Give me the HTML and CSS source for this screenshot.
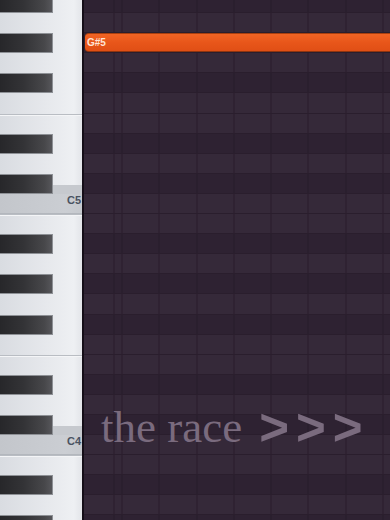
FILE: index.html
```html
<!DOCTYPE html>
<html>
<head>
<meta charset="utf-8">
<link rel="stylesheet" href="styles.css">
</head>
<body>
<div class="app">
  <div class="keys">
    <div class="k blk"><div class="bk"></div></div>
    <div class="k"></div>
    <div class="k blk"><div class="bk"></div></div>
    <div class="k"></div>
    <div class="k blk"><div class="bk"></div></div>
    <div class="k"></div>
    <div class="k e"></div>
    <div class="k blk"><div class="bk"></div></div>
    <div class="k"></div>
    <div class="k blk pre"><div class="bk"></div></div>
    <div class="k c"><span class="lbl">C5</span></div>
    <div class="k e"></div>
    <div class="k blk"><div class="bk"></div></div>
    <div class="k"></div>
    <div class="k blk"><div class="bk"></div></div>
    <div class="k"></div>
    <div class="k blk"><div class="bk"></div></div>
    <div class="k"></div>
    <div class="k e"></div>
    <div class="k blk"><div class="bk"></div></div>
    <div class="k"></div>
    <div class="k blk pre"><div class="bk"></div></div>
    <div class="k c"><span class="lbl">C4</span></div>
    <div class="k e"></div>
    <div class="k blk"><div class="bk"></div></div>
    <div class="k"></div>
    <div class="k blk"><div class="bk"></div></div>
  </div>
  <div class="roll">
    <div class="r dk"></div>
    <div class="r"></div>
    <div class="r dk"><div class="note">G#5</div></div>
    <div class="r"></div>
    <div class="r dk"></div>
    <div class="r"></div>
    <div class="r"></div>
    <div class="r dk"></div>
    <div class="r"></div>
    <div class="r dk"></div>
    <div class="r"></div>
    <div class="r"></div>
    <div class="r dk"></div>
    <div class="r"></div>
    <div class="r dk"></div>
    <div class="r"></div>
    <div class="r dk"></div>
    <div class="r"></div>
    <div class="r"></div>
    <div class="r dk"></div>
    <div class="r"></div>
    <div class="r dk"></div>
    <div class="r"></div>
    <div class="r"></div>
    <div class="r dk"></div>
    <div class="r"></div>
    <div class="r dk"></div>
  </div>
  <div class="title">the race<span class="arrows">&gt;&gt;&gt;</span></div>
</div>
</body>
</html>
```
FILE: styles.css
```css
html, body {
  margin: 0;
  padding: 0;
  background: #2c2030;
  overflow: hidden;
}
.app {
  position: relative;
  display: flex;
  width: 390px;
  height: 520px;
  overflow: hidden;
}
.keys {
  width: 82px;
  flex: none;
  border-right: 2px solid #150e18;
  background: linear-gradient(to right, #d9dce1 0%, #e6e8ec 55%, #eef0f3 90%, #e3e5e9 100%);
  display: flex;
  flex-direction: column;
  margin-top: -7px;
}
.k {
  height: 20.1px;
  flex: none;
  display: flex;
  box-sizing: border-box;
}
.k.e {
  box-shadow: inset 0 1px 0 #b9bdc3, inset 0 2px 0 #f4f5f7;
}
.k.pre {
  background: linear-gradient(to bottom, transparent 11px, #c6c9ce 11px);
}
.k.c {
  background: linear-gradient(to right, #c3c6cb, #cbced3 80%, #c6c9ce);
  justify-content: flex-end;
  align-items: flex-start;
  box-shadow: inset 0 -1px 0 #b3b7bd;
}
.lbl {
  font-family: "Liberation Sans", Arial, sans-serif;
  font-weight: bold;
  font-size: 11px;
  line-height: 12px;
  color: #4a5361;
  padding-right: 1px;
}
.bk {
  width: 53px;
  height: 100%;
  box-sizing: border-box;
  background: linear-gradient(to right, #27272a 0%, #333336 45%, #47474a 85%, #56565a 100%);
  border: 1px solid #8d9095;
  border-left: none;
}
.roll {
  flex: 1;
  display: flex;
  flex-direction: column;
  margin-top: -7px;
}
.r {
  height: 20.1px;
  flex: none;
  box-sizing: border-box;
  border-bottom: 1px solid #2a1e2d;
  background:
    repeating-linear-gradient(to right, #281c2b 0 1px, transparent 1px 37.3px),
    #352939;
  background-position: 37.5px 0, 0 0;
}
.r.dk {
  background:
    repeating-linear-gradient(to right, #261b29 0 1px, transparent 1px 37.3px),
    #2e2232;
  background-position: 37.5px 0, 0 0;
}
.note {
  height: 100%;
  box-sizing: border-box;
  margin-left: 1px;
  border-radius: 4px 0 0 4px;
  background: linear-gradient(to bottom, #f06424, #e8561a 50%, #e04f15);
  border-top: 1px solid #a9400f;
  border-bottom: 1px solid #8f3510;
  font-family: "Liberation Sans", Arial, sans-serif;
  font-weight: bold;
  font-size: 10px;
  line-height: 18px;
  color: #ffe4d6;
  padding-left: 2px;
}
.title {
  position: absolute;
  left: 101px;
  top: 405px;
  font-family: "Liberation Serif", "Times New Roman", serif;
  font-size: 45px;
  line-height: 1;
  color: #7a6b7e;
  white-space: nowrap;
}
.arrows {
  font-family: "Liberation Sans", Arial, sans-serif;
  font-weight: bold;
  font-size: 51px;
  line-height: 0;
  letter-spacing: 7px;
  margin-left: 17px;
  position: relative;
  top: 3px;
}
```
